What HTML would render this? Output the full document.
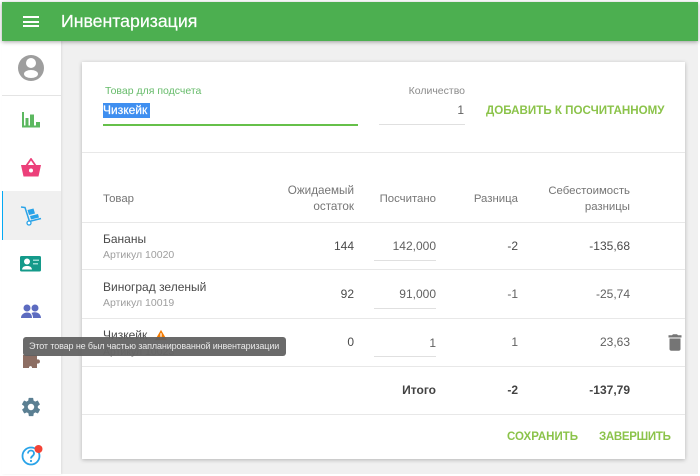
<!DOCTYPE html>
<html><head><meta charset="utf-8"><style>
html,body{margin:0;padding:0;background:#fff;width:700px;height:476px;overflow:hidden}
body{position:relative;font-family:"Liberation Sans",sans-serif}
#w{position:absolute;left:0;top:0;width:700px;height:476px;filter:blur(.3px)}
.a{position:absolute;white-space:nowrap}
.r{text-align:right}
.line{position:absolute;height:1px;background:#e8e8e8;left:82px;width:603px}
.u{position:absolute;height:1px;background:#e0e0e0;left:374px;width:62px}
.h{font-size:11.4px;color:#757575;line-height:16px}
.n{font-size:12px;color:#4a4a4a;line-height:14px}
.s{font-size:10.5px;color:#9e9e9e;line-height:14px}
svg{position:absolute;display:block}
</style></head><body><div id="w">
<div class="a" style="left:2px;top:2px;width:696px;height:472px;background:#f0f0f0"></div>
<div class="a" style="left:2px;top:41px;width:59px;height:433px;background:#fff;box-shadow:1px 0 2px rgba(0,0,0,.08)"></div>
<div class="a" style="left:2px;top:2px;width:696px;height:39px;background:#4caf50;box-shadow:0 1px 4px rgba(0,0,0,.35)"></div>
<div class="a" style="left:23px;top:16px;width:16px;height:2px;background:#fff"></div>
<div class="a" style="left:23px;top:20.5px;width:16px;height:2px;background:#fff"></div>
<div class="a" style="left:23px;top:25px;width:16px;height:2px;background:#fff"></div>
<div class="a" style="left:61px;top:9px;font-size:17.7px;line-height:24px;color:#fff;-webkit-text-stroke:.2px #fff">Инвентаризация</div>

<div class="a" style="left:2px;top:95px;width:59px;height:1px;background:#e4e4e4"></div>
<svg style="left:18px;top:55px" width="26" height="26" viewBox="0 0 26 26"><circle cx="13" cy="13" r="13" fill="#9e9e9e"/><circle cx="13" cy="8" r="5" fill="#fff"/><ellipse cx="13" cy="19" rx="7" ry="4" fill="#fff"/></svg>
<svg style="left:21px;top:111px" width="20" height="18" viewBox="0 0 20 18"><path d="M1 1h2v13.500h1.500V7h3v7.500H9V3.500h4v11h2V11h4v5.500H1z" fill="#5cb860"/></svg>
<svg style="left:20px;top:158px" width="22" height="20" viewBox="0 0 22 20"><path d="M1 7h20l-2.500 11.500H3.500z" fill="#ec407a"/><path d="M6.500 7.500L11 1l4.500 6.500" stroke="#ec407a" stroke-width="1.800" fill="none"/><circle cx="11" cy="12.500" r="2" fill="#fff"/></svg>
<div class="a" style="left:2px;top:191px;width:59px;height:49px;background:#f0f0f0"></div>
<div class="a" style="left:2px;top:191px;width:1px;height:49px;background:#03a9f4"></div>
<svg style="left:20px;top:206px" width="22" height="20" viewBox="0 0 22 20"><path d="M1 1l4 .5 4.500 14" stroke="#29a3e8" stroke-width="1.500" fill="none"/><path d="M9 15.500l12-3" stroke="#29a3e8" stroke-width="1.500"/><circle cx="9" cy="17" r="2" fill="#fff" stroke="#29a3e8" stroke-width="1.300"/><path d="M7.500 4l6-1.500 1.500 5-6 1.500z M10 10l8-2 1 3.500-8 2z" fill="#29a3e8"/></svg>
<svg style="left:20px;top:256px" width="22" height="16" viewBox="0 0 22 16"><rect width="21" height="15.500" rx="1.500" fill="#149a8a"/><circle cx="7" cy="5.500" r="3" fill="#fff"/><path d="M2 13.500c.5-3 2.500-3.500 5-3.500s4.500.5 5 3.500z" fill="#fff"/><path d="M13 3.500h6V5h-6z M13 7h5v1.500h-5z" fill="#9adbd2"/></svg>
<svg style="left:21px;top:304px" width="20" height="15" viewBox="0 0 20 15"><circle cx="6" cy="4" r="3.500" fill="#5c6bc0"/><circle cx="14" cy="4" r="3.500" fill="#5c6bc0"/><path d="M0 14c0-3.500 3-5.500 6-5.500s5 1.500 5 5.500z M12 14c0-2-.5-3.500-1.500-5 1-.5 2.500-.7 3.500-.7 3 0 6 2.200 6 5.700z" fill="#5c6bc0"/></svg>
<svg style="left:21.500px;top:350px" width="20" height="19" viewBox="0 0 20 19"><path d="M1 5h14v4.500c4-1 4 5 0 4V18h-5c.5-2.500-3.500-2.500-3 0H1z" fill="#8d6e63"/></svg>
<svg style="left:20px;top:396px" width="22" height="22" viewBox="0 0 24 24"><path d="M19.400 13c.1-.3.100-.7.100-1s0-.7-.1-1l2.100-1.600c.2-.2.200-.4.100-.6l-2-3.500c-.1-.2-.4-.3-.6-.2l-2.500 1c-.5-.4-1.100-.7-1.700-1l-.4-2.600c0-.3-.2-.5-.5-.5h-4c-.3 0-.5.200-.5.500l-.4 2.600c-.6.300-1.200.6-1.700 1l-2.500-1c-.2-.1-.5 0-.6.200l-2 3.500c-.1.200-.1.400.1.600L4.600 11c-.1.300-.1.700-.1 1s0 .7.1 1l-2.100 1.600c-.2.200-.2.400-.1.600l2 3.500c.1.200.4.300.6.200l2.500-1c.5.400 1.100.7 1.700 1l.4 2.600c0 .3.200.5.500.5h4c.3 0 .5-.2.500-.5l.4-2.600c.6-.3 1.200-.6 1.700-1l2.500 1c.2.100.5 0 .6-.2l2-3.500c.1-.2.100-.4-.1-.6zM12 15.500a3.500 3.500 0 1 1 0-7 3.500 3.500 0 0 1 0 7z" fill="#5b7f92"/></svg>
<svg style="left:20px;top:443px" width="24" height="24" viewBox="0 0 24 24"><circle cx="11" cy="13" r="8.500" fill="#fff" stroke="#29a3e8" stroke-width="1.800"/><path d="M8 10.500c0-4 6-4 6 0 0 2.500-3 2.500-3 5" stroke="#29a3e8" stroke-width="1.800" fill="none"/><circle cx="11" cy="18" r="1.100" fill="#29a3e8"/><circle cx="18.500" cy="6" r="4" fill="#f44336"/></svg>

<div class="a" style="left:82px;top:62px;width:603px;height:397px;background:#fff;box-shadow:0 1px 4px rgba(0,0,0,.25)"></div>

<div class="a" style="left:105px;top:84px;font-size:10.5px;line-height:14px;color:#66bb6a">Товар для подсчета</div>
<div class="a" style="left:103px;top:103px;width:47px;height:15px;background:#3f8ff0"></div>
<div class="a" style="left:103px;top:103px;font-size:12px;line-height:15px;color:#fff;-webkit-text-stroke:.2px #fff">Чизкейк</div>
<div class="a" style="left:103px;top:124px;width:255px;height:1.500px;background:#66c04a"></div>
<div class="a r" style="left:380px;top:84px;width:85px;font-size:10.5px;line-height:14px;color:#8a8a8a">Количество</div>
<div class="a r" style="left:380px;top:103px;width:84px;font-size:12px;line-height:15px;color:#616161">1</div>
<div class="u" style="left:379px;top:124px;width:86px"></div>
<div class="a" style="left:486px;top:103px;font-size:11.6px;line-height:15px;font-weight:700;color:#8bc34a">ДОБАВИТЬ К ПОСЧИТАННОМУ</div>
<div class="line" style="top:152px"></div>

<div class="a h" style="left:103px;top:191px">Товар</div>
<div class="a h r" style="left:250px;top:183px;width:104px;font-size:11.7px">Ожидаемый<br>остаток</div>
<div class="a h r" style="left:360px;top:191px;width:76px">Посчитано</div>
<div class="a h r" style="left:450px;top:191px;width:68px">Разница</div>
<div class="a h r" style="left:520px;top:183px;width:110px">Себестоимость<br>разницы</div>
<div class="line" style="top:222px"></div>

<div class="a n" style="left:103px;top:232px">Бананы</div>
<div class="a s" style="left:103px;top:248px">Артикул 10020</div>
<div class="a n r" style="left:300px;top:239px;width:54px">144</div>
<div class="a n r" style="left:370px;top:239px;width:66px;color:#616161">142,000</div>
<div class="u" style="top:260px"></div>
<div class="a n r" style="left:470px;top:239px;width:48px">-2</div>
<div class="a n r" style="left:560px;top:239px;width:70px">-135,68</div>
<div class="line" style="top:269px"></div>

<div class="a n" style="left:103px;top:280px">Виноград зеленый</div>
<div class="a s" style="left:103px;top:296px">Артикул 10019</div>
<div class="a n r" style="left:300px;top:287px;width:54px">92</div>
<div class="a n r" style="left:370px;top:287px;width:66px;color:#616161">91,000</div>
<div class="u" style="top:308px"></div>
<div class="a n r" style="left:470px;top:287px;width:48px;color:#616161">-1</div>
<div class="a n r" style="left:560px;top:287px;width:70px;color:#616161">-25,74</div>
<div class="line" style="top:317.500px;height:1.500px"></div>

<div class="a n" style="left:103px;top:328px">Чизкейк</div>
<svg style="left:155px;top:329px" width="12" height="12" viewBox="0 0 14 12"><path d="M7 0l7 12H0z" fill="#f57c00"/><path d="M6.300 4h1.400v4H6.300zM6.300 9h1.400v1.300H6.300z" fill="#fff"/></svg>
<div class="a s" style="left:103px;top:345px">Артикул 10023</div>
<div class="a n r" style="left:300px;top:335px;width:54px">0</div>
<div class="a n r" style="left:370px;top:336px;width:66px;color:#616161">1</div>
<div class="u" style="top:356px"></div>
<div class="a n r" style="left:470px;top:335px;width:48px;color:#616161">1</div>
<div class="a n r" style="left:560px;top:335px;width:70px;color:#616161">23,63</div>
<svg style="left:666px;top:333px" width="18" height="19" viewBox="0 0 18 19"><path d="M2.500 2.200H6l1-1h4l1 1h3.500v2.300h-13z M3.500 5.500h11V16c0 1-.8 1.800-1.800 1.800H5.300c-1 0-1.800-.8-1.800-1.800z" fill="#757575"/></svg>
<div class="line" style="top:366px"></div>

<div class="a n r" style="left:370px;top:383px;width:66px;font-weight:700;color:#424242">Итого</div>
<div class="a n r" style="left:470px;top:383px;width:48px;font-weight:700;color:#424242">-2</div>
<div class="a n r" style="left:560px;top:383px;width:70px;font-weight:700;color:#424242">-137,79</div>
<div class="line" style="top:414px"></div>

<div class="a" style="left:507px;top:430px;font-size:11.5px;line-height:15px;font-weight:700;color:#8bc34a">СОХРАНИТЬ</div>
<div class="a" style="left:599px;top:430px;font-size:11.5px;letter-spacing:-.3px;line-height:15px;font-weight:700;color:#8bc34a">ЗАВЕРШИТЬ</div>

<div class="a" style="left:23px;top:337px;width:263px;height:19px;background:rgba(97,97,97,.94);border-radius:3px;color:#e8e8e8;font-size:9px;letter-spacing:-.12px;line-height:19px;text-indent:6px;overflow:hidden">Этот товар не был частью запланированной инвентаризации</div>
</div></body></html>
